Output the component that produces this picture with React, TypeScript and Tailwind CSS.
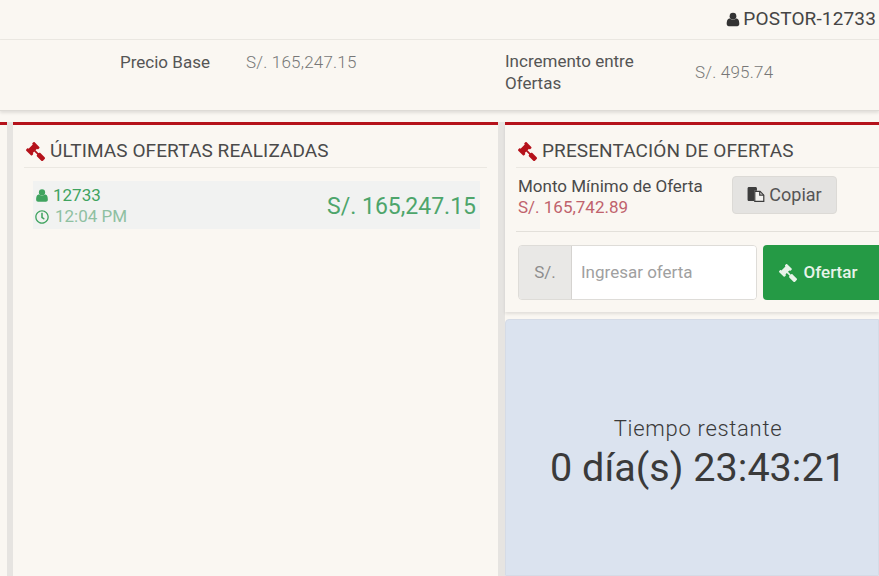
import { FaGavel, FaRegClock } from "react-icons/fa";

const UserIcon = ({ className }: { className?: string }) => (
  <svg viewBox="0 0 20 20" fill="currentColor" className={className}>
    <circle cx="10" cy="5.2" r="4.8" />
    <path d="M1 16.5c0-4.5 1-8 4.6-8 1.1 1.1 2.6 1.7 4.4 1.7s3.300-.6 4.400-1.700c3.600 0 4.600 3.500 4.600 8 0 1.800-1.200 3.100-3 3.100H4c-1.800 0-3-1.300-3-3.100z" />
  </svg>
);

const PasteIcon = ({ className }: { className?: string }) => (
  <svg viewBox="0 0 18 16" className={className}>
    <path d="M0 1.500C0 .7.700 0 1.500 0h7C9.300 0 10 .7 10 1.500V4H7v11H1.500C.7 15 0 14.300 0 13.500z" fill="#3d3d3d" />
    <path d="M7.700 4.700h5.600l4 4v6.600H7.700z" fill="#f4f3f1" stroke="#3d3d3d" strokeWidth="1.300" />
    <path d="M13 4.700v4h4.300" fill="none" stroke="#3d3d3d" strokeWidth="1.300" />
  </svg>
);

const App = () => {
  return (
    <div className="flex h-[576px] w-[879px] flex-col overflow-hidden bg-[#faf7f2] font-['Roboto',sans-serif] text-[#4a4a4a]">
      {/* Top bar */}
      <div className="flex h-[40px] shrink-0 items-center justify-end border-b border-[#ebe8e2] pr-[3px] text-[19px] tracking-[0.15px] text-[#454545]">
        <UserIcon className="mr-[3px] h-[15px] w-[14px] text-[#333]" />
        POSTOR-12733
      </div>

      {/* Datos de la subasta */}
      <div className="z-10 flex h-[71px] shrink-0 items-start border-b border-[#dedbd6] shadow-[0_2px_3px_rgba(0,0,0,0.1)]">
        <div className="ml-[120px] mt-[11px] w-[126px] text-[17px] leading-[22px] text-[#555]">Precio Base</div>
        <div className="mt-[11px] w-[259px] text-[17px] font-light leading-[22px] tracking-[0.2px] text-[#777]">S/. 165,247.15</div>
        <div className="mt-[10px] w-[190px] text-[17px] leading-[22px] text-[#555]">
          Incremento entre
          <br />
          Ofertas
        </div>
        <div className="mt-[21px] text-[17px] font-light leading-[22px] tracking-[0.2px] text-[#777]">S/. 495.74</div>
      </div>

      {/* Paneles */}
      <div className="flex min-h-0 flex-1 bg-[#faf7f2] pt-[11px]">
        <div className="w-[7px] shrink-0 border-t-[3px] border-[#b5121b]" />
        <div className="w-[6px] shrink-0 bg-[#e6e4e1]" />

        <div className="w-[485px] shrink-0 border-t-[3px] border-[#b5121b] px-[11px]">
          <div className="flex h-[43px] items-center gap-[5px] border-b border-[#ebe8e2] pl-[2px] pt-[10px] text-[19px] tracking-[0.1px] text-[#4a4a4a]">
            <FaGavel className="-scale-x-100 text-[19px] text-[#b5121b]" />
            ÚLTIMAS OFERTAS REALIZADAS
          </div>
          <div className="ml-[9px] mt-[13px] flex h-[48px] w-[447px] items-center justify-between bg-[#f1f2f1] pl-[2px] pr-[4px]">
            <div className="mt-[2px] text-[17px] leading-[21px]">
              <div className="flex items-center gap-[4px] text-[#3fa35f]">
                <UserIcon className="h-[13px] w-[14px]" />
                12733
              </div>
              <div className="flex items-center gap-[6px] text-[#8fc0a1]">
                <FaRegClock className="text-[14px] text-[#3fa35f]" />
                12:04 PM
              </div>
            </div>
            <div className="mt-[4px] text-[23px] text-[#4da56b]">S/. 165,247.15</div>
          </div>
        </div>

        <div className="w-[7px] shrink-0 bg-[#e6e4e1]" />

        <div className="flex min-w-0 flex-1 flex-col border-t-[3px] border-[#b5121b]">
          <div className="shadow-[0_2px_3px_rgba(0,0,0,0.1)]">
            <div className="ml-[11px] flex h-[43px] items-center gap-[5px] border-b border-[#ebe8e2] pl-[2px] pt-[10px] text-[19px] tracking-[0.1px] text-[#4a4a4a]">
              <FaGavel className="-scale-x-100 text-[19px] text-[#b5121b]" />
              PRESENTACIÓN DE OFERTAS
            </div>
            <div className="ml-[11px] flex h-[64px] items-start border-b border-[#e3e0da] pl-[2px] pt-[8px]">
              <div className="w-[214px] text-[17px] leading-[21px]">
                <div className="text-[#4a4a4a]">Monto Mínimo de Oferta</div>
                <div className="text-[#c0626c]">S/. 165,742.89</div>
              </div>
              <button className="flex h-[38px] w-[105px] items-center justify-center gap-[4px] rounded-[4px] border border-[#dcdad6] bg-[#e4e3e1] pb-[2px] text-[18px] text-[#555]">
                <PasteIcon className="h-[15px] w-[18px]" />
                Copiar
              </button>
            </div>
            <div className="flex h-[80px] items-start pl-[13px] pt-[13px]">
              <div className="flex h-[55px] w-[239px] overflow-hidden rounded-[4px] border border-[#dedcd8]">
                <div className="flex w-[53px] shrink-0 items-center justify-center border-r border-[#d5d3d0] bg-[#e9e8e6] text-[17px] text-[#8d8d8d]">
                  S/.
                </div>
                <div className="flex flex-1 items-center bg-white pl-[9px] text-[17px] text-[#a0a0a0]">Ingresar oferta</div>
              </div>
              <button className="ml-[6px] flex h-[55px] flex-1 items-center justify-center gap-[7px] rounded-l-[4px] bg-[#259a45] pr-[6px] text-[17px] font-medium text-[#e8f3e9]">
                <FaGavel className="-scale-x-100 text-[18px]" />
                Ofertar
              </button>
            </div>
          </div>

          {/* Contador */}
          <div className="mt-[7px] flex flex-1 flex-col items-center rounded-tl-[4px] border border-[#d5dbe6] bg-[#dbe3ef] pl-[12px] pt-[95px] text-[#3a3a3a]">
            <div className="text-[22px] font-light leading-[28px] tracking-[0.7px]">Tiempo restante</div>
            <div className="mt-[1px] text-[39.6px] leading-[48px]">0 día(s) 23:43:21</div>
          </div>
        </div>
      </div>
    </div>
  );
};

export default App;
